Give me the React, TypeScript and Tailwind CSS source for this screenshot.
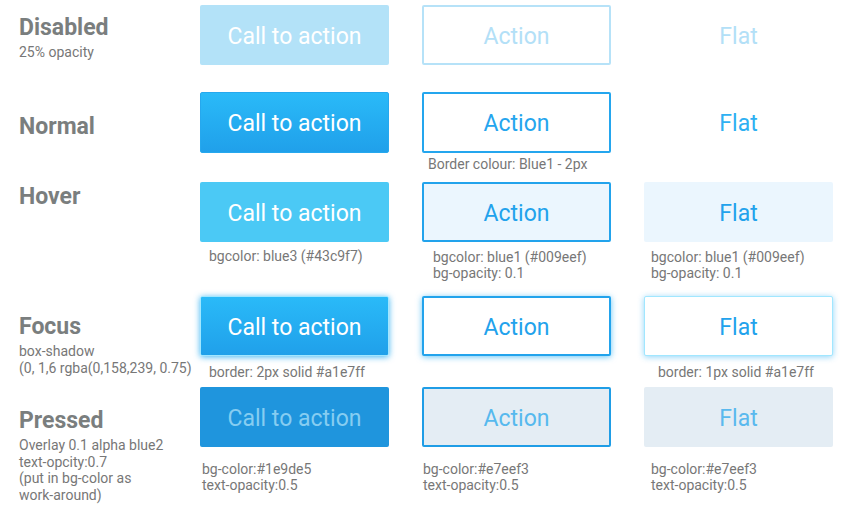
const CELL = "w-[222px] shrink-0";
const BTN = "w-[189px] h-[60px] rounded-[2px] flex items-center justify-center pt-[2px] text-[23px] leading-none";
const CAP = "text-[14px] leading-[16px] text-[#777]";
const HEAD = "text-[23px] leading-[28px] font-bold text-[#7a7e7e]";

function Label({ title, top, lines }: { title: string; top: number; lines?: string[] }) {
  return (
    <div className="w-[200px] shrink-0 pl-[19px]">
      <div className={HEAD} style={{ marginTop: top }}>{title}</div>
      {lines && (
        <div className="mt-[2px] text-[14px] leading-[16.5px] text-[#777]">
          {lines.map((l) => (
            <div key={l}>{l}</div>
          ))}
        </div>
      )}
    </div>
  );
}

export default function App() {
  return (
    <div className="w-[853px] h-[518px] bg-white overflow-hidden pt-[5px]" style={{ fontFamily: "Roboto, 'Noto Sans', sans-serif" }}>
      {/* Disabled */}
      <div className="flex h-[87px]">
        <Label title="Disabled" top={9} lines={["25% opacity"]} />
        <div className={CELL}>
          <div className={`${BTN} bg-[#b3e2f8] text-white`}>Call to action</div>
        </div>
        <div className={CELL}>
          <div className={`${BTN} border-2 border-[#b6e2f8] text-[#b3e0f7]`}>Action</div>
        </div>
        <div className={CELL}>
          <div className={`${BTN} text-[#b3e0f7]`}>Flat</div>
        </div>
      </div>

      {/* Normal */}
      <div className="flex h-[90px]">
        <Label title="Normal" top={21} />
        <div className={CELL}>
          <div className={`${BTN} h-[61px] border border-[#26a8ee] bg-gradient-to-b from-[#2abaf8] to-[#20a0ea] text-white`}>Call to action</div>
        </div>
        <div className={CELL}>
          <div className={`${BTN} h-[61px] border-2 border-[#24a6ee] text-[#25a5ee]`}>Action</div>
          <div className={`${CAP} mt-[3px] pl-[6px]`}>Border colour: Blue1 - 2px</div>
        </div>
        <div className={CELL}>
          <div className={`${BTN} text-[#2eb0f2]`}>Flat</div>
        </div>
      </div>

      {/* Hover */}
      <div className="flex h-[114px]">
        <Label title="Hover" top={1} />
        <div className={CELL}>
          <div className={`${BTN} bg-[#4bc9f5] text-white`}>Call to action</div>
          <div className={`${CAP} mt-[6px] pl-[9px]`}>bgcolor: blue3 (#43c9f7)</div>
        </div>
        <div className={CELL}>
          <div className={`${BTN} border-2 border-[#22a3ec] bg-[#ebf6fe] text-[#22a2ec]`}>Action</div>
          <div className={`${CAP} mt-[7px] pl-[11px]`}>
            <div>bgcolor: blue1 (#009eef)</div>
            <div>bg-opacity: 0.1</div>
          </div>
        </div>
        <div className={CELL}>
          <div className={`${BTN} bg-[#ebf6fe] text-[#22a2ec]`}>Flat</div>
          <div className={`${CAP} mt-[7px] pl-[7px]`}>
            <div>bgcolor: blue1 (#009eef)</div>
            <div>bg-opacity: 0.1</div>
          </div>
        </div>
      </div>

      {/* Focus */}
      <div className="flex h-[91px]">
        <Label title="Focus" top={17} lines={["box-shadow", "(0, 1,6 rgba(0,158,239, 0.75)"]} />
        <div className={CELL}>
          <div className={`${BTN} border border-[#a1e7ff] bg-gradient-to-b from-[#2abaf8] to-[#20a0ea] text-white shadow-[0_1px_6px_rgba(0,158,239,0.75)]`}>Call to action</div>
          <div className={`${CAP} mt-[8px] pl-[9px]`}>border: 2px solid #a1e7ff</div>
        </div>
        <div className={CELL}>
          <div className={`${BTN} border-2 border-[#22a3ec] bg-white text-[#22a2ec] shadow-[0_1px_6px_rgba(0,158,239,0.6)]`}>Action</div>
        </div>
        <div className={CELL}>
          <div className={`${BTN} border border-[#a1e7ff] bg-white text-[#22a2ec] shadow-[0_1px_6px_rgba(0,158,239,0.45)]`}>Flat</div>
          <div className={`${CAP} mt-[8px] pl-[14px]`}>border: 1px solid #a1e7ff</div>
        </div>
      </div>

      {/* Pressed */}
      <div className="flex">
        <Label
          title="Pressed"
          top={20}
          lines={["Overlay 0.1 alpha blue2", "text-opcity:0.7", "(put in bg-color as", "work-around)"]}
        />
        <div className={CELL}>
          <div className={`${BTN} bg-[#1f95dd] text-[#86cdf1]`}>Call to action</div>
          <div className={`${CAP} mt-[14px] pl-[2px]`}>
            <div>bg-color:#1e9de5</div>
            <div>text-opacity:0.5</div>
          </div>
        </div>
        <div className={CELL}>
          <div className={`${BTN} border-2 border-[#1f9de6] bg-[#e4edf4] text-[#56b9ee]`}>Action</div>
          <div className={`${CAP} mt-[14px] pl-[1px]`}>
            <div>bg-color:#e7eef3</div>
            <div>text-opacity:0.5</div>
          </div>
        </div>
        <div className={CELL}>
          <div className={`${BTN} bg-[#e4edf4] text-[#5ab9ee]`}>Flat</div>
          <div className={`${CAP} mt-[14px] pl-[7px]`}>
            <div>bg-color:#e7eef3</div>
            <div>text-opacity:0.5</div>
          </div>
        </div>
      </div>
    </div>
  );
}
